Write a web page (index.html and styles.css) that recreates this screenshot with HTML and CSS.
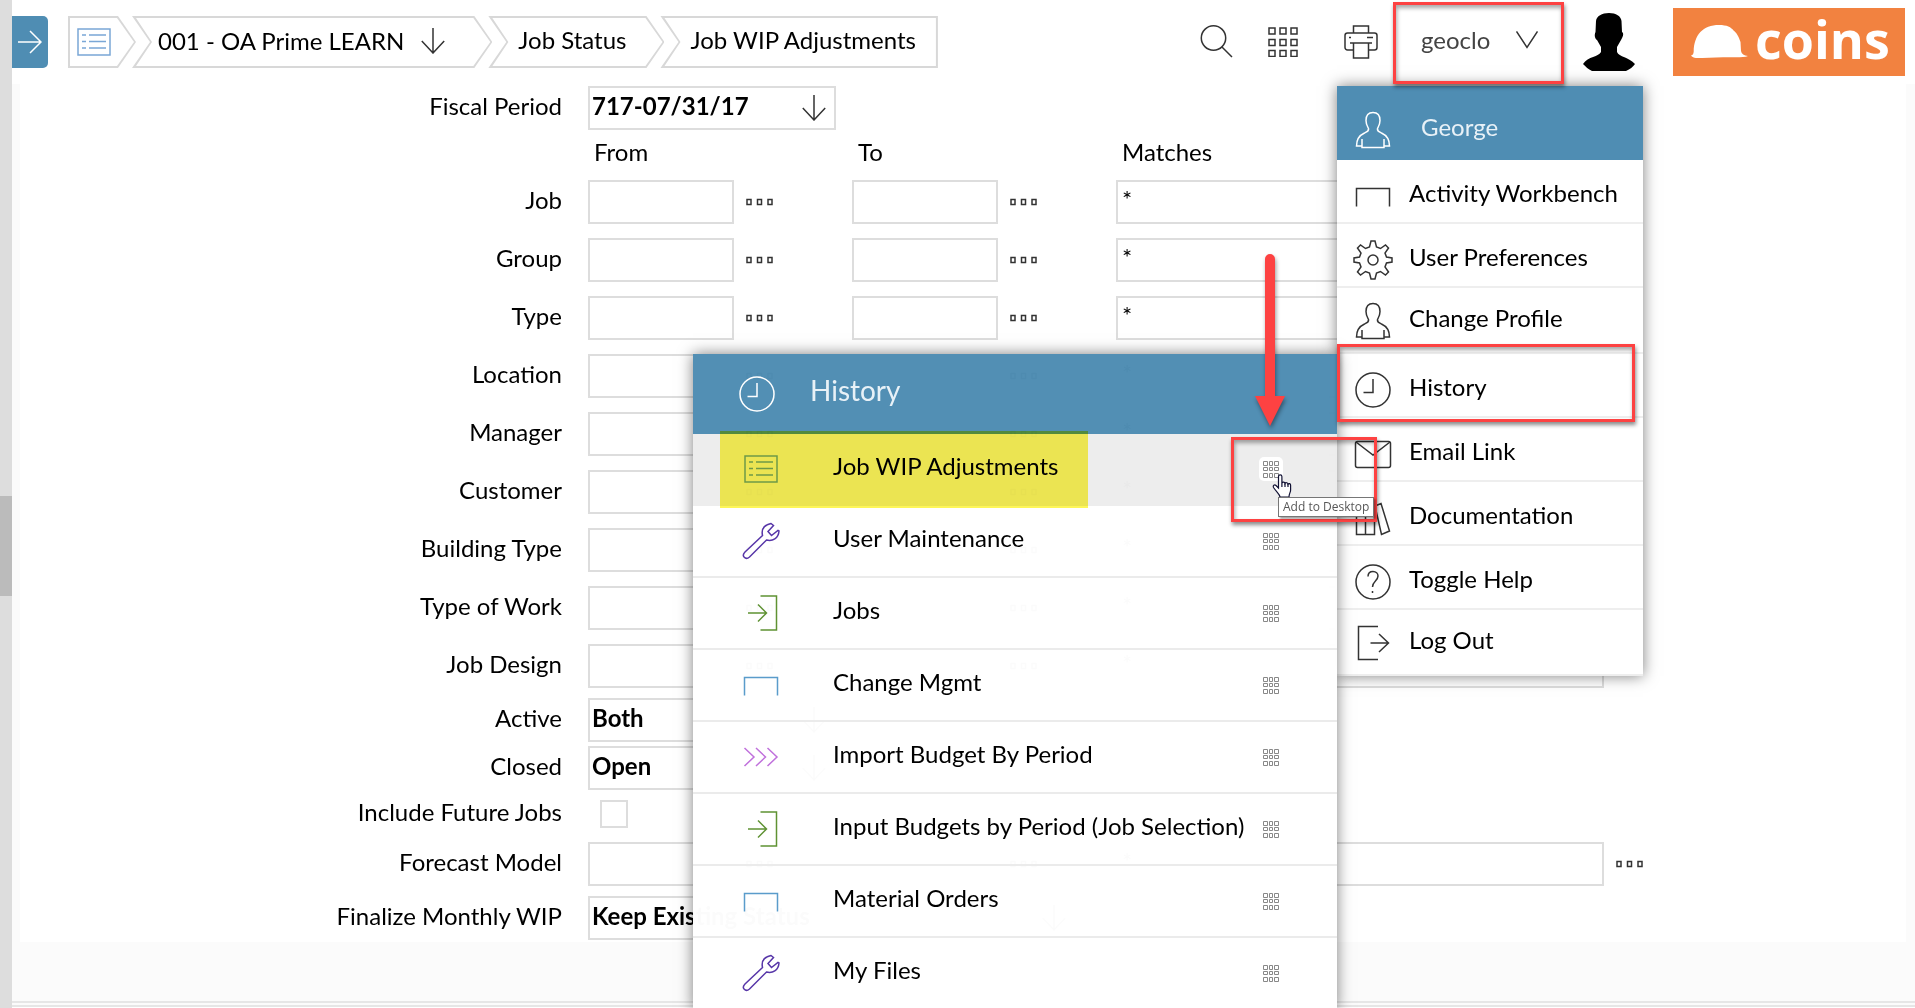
FILE: index.html
```html
<!DOCTYPE html>
<html lang="en">
<head>
<meta charset="utf-8">
<title>Job WIP Adjustments</title>
<link rel="stylesheet" href="styles.css">
</head>
<body>
<svg class="sprite" aria-hidden="true">
  <symbol id="i-dots" viewBox="0 0 28 8"><path d="M1 1.500h4v5H1zM11.500 1.500h4v5h-4zM22 1.500h4v5h-4z"/></symbol>
  <symbol id="i-down" viewBox="0 0 24 26"><path d="M12 0v25M.800 13 12 25 23.200 13"/></symbol>
  <symbol id="i-list" viewBox="0 0 34 28"><path d="M1 1h32v26H1zM5 7h4M12 7h17M5 13.500h4M12 13.500h17M5 20h4M12 20h17"/></symbol>
  <symbol id="i-grid" viewBox="0 0 30 30"><path d="M1 1h6v6H1zM12 1h6v6h-6zM23 1h6v6h-6zM1 12.500h6v6H1zM12 12.500h6v6h-6zM23 12.500h6v6h-6zM1 23.500h6v6H1zM12 23.500h6v6h-6zM23 23.500h6v6h-6z"/></symbol>
  <symbol id="i-tiles" viewBox="0 0 16 17"><path d="M.500.500h4v4h-4zM6.500.500h3v4h-3zM11.500.500h4v4h-4zM.500 6.500h4v3h-4zM6.500 6.500h3v3h-3zM11.500 6.500h4v3h-4zM.500 12.500h4v4h-4zM6.500 12.500h3v4h-3zM11.500 12.500h4v4h-4z"/></symbol>
  <symbol id="i-person" viewBox="0 0 40 40"><path d="M20 2.500c-5 0-7 3.500-7 8 0 4 1.500 6 2.500 8 .500 2.500-1 3-4 4.500C6 25.500 3.500 29 3.500 36h5.500v1.500h22V36h5.500C36.500 29 34 25.500 28.500 23c-3-1.500-4.500-2-4-4.500 1-2 2.500-4 2.500-8 0-4.500-2-8-7-8zM9 29v7M31 29v7"/></symbol>
  <symbol id="i-bench" viewBox="0 0 40 40"><path d="M3.500 30.500v-18h33v18"/></symbol>
  <symbol id="i-gear" viewBox="0 0 40 40"><circle cx="20" cy="20" r="5"/><path d="M18 1h4l1.500 6 4 1.500 5-3.500 3 3-3.500 5 1.500 4 5.500 1v4l-5.500 1-1.500 4 3.500 5-3 3-5-3.500-4 1.500-1.500 6h-4l-1.500-6-4-1.500-5 3.500-3-3L8 27l-1.500-4-5.500-1v-4l5.500-1L8 13 4.500 8l3-3 5 3.500 4-1.500z"/></symbol>
  <symbol id="i-clock" viewBox="0 0 40 40"><circle cx="20" cy="20" r="17"/><path d="M20 9v13.500h-9.500"/></symbol>
  <symbol id="i-mail" viewBox="0 0 40 40"><rect x="2.500" y="7.500" width="35" height="26" rx="2"/><path d="m3 8 17 13L37 8"/></symbol>
  <symbol id="i-books" viewBox="0 0 40 40"><path d="M3.500 5.500h9v31h-9zM12.500 5.500h9v31h-9zM22 8l6-2.500L36.500 33l-8 3.500z"/></symbol>
  <symbol id="i-help" viewBox="0 0 40 40"><circle cx="20" cy="20" r="17"/><path d="M15 14.500c0-3 2-5 5-5s5 2 5 4.500c0 5-5.500 5-5.500 11M19.500 29v2"/></symbol>
  <symbol id="i-logout" viewBox="0 0 40 40"><path d="M25 3.500H5.500v33H25M17.500 20h18M26 11l9.500 9-9.500 9"/></symbol>
  <symbol id="i-login" viewBox="0 0 40 40"><path d="M19.500 3h16v34h-16M7 20h18.500M17 11.500l8.500 8.500-8.500 8.500"/></symbol>
  <symbol id="i-wrench" viewBox="0 0 40 40"><path d="M30 2.500c-7 1.500-10 5-8.500 12L4 31c-4 4 .5 8.500 4.500 5L25.500 19c6 1.500 12-1.500 12.500-9l-1-.5-6.500 5-3.500-4 5.500-6z"/></symbol>
  <symbol id="i-chevs" viewBox="0 0 40 40"><path d="M3.500 11 13 20l-9.500 9M15 11l9.500 9-9.500 9M26.500 11l9.500 9-9.500 9"/></symbol>
</svg>

<div class="app">
  <div class="splitter"><div class="splitter-thumb"></div></div>

  <div class="page">
    <header class="topbar">
      <button class="expand" type="button" aria-label="Expand menu">
        <svg width="24" height="24" viewBox="0 0 24 24"><path d="M0 12h23M12 1l11 11-11 11"/></svg>
      </button>
      <nav class="crumbs" aria-label="Breadcrumb">
        <a class="crumb crumb-first" href="#" aria-label="Home"><svg class="ico-list" width="34" height="28"><use href="#i-list"/></svg></a>
        <a class="crumb crumb-company" href="#">001 - OA Prime LEARN <svg width="24" height="26"><use href="#i-down"/></svg></a>
        <a class="crumb" href="#">Job Status</a>
        <a class="crumb crumb-last" href="#">Job WIP Adjustments</a>
      </nav>
      <div class="tools">
        <button type="button" aria-label="Search"><svg width="34" height="34" viewBox="0 0 34 34"><circle cx="13.500" cy="13" r="12.200"/><path d="m22 22 10 10"/></svg></button>
        <button class="tool-grid" type="button" aria-label="Desktop"><svg width="30" height="30"><use href="#i-grid"/></svg></button>
        <button class="tool-print" type="button" aria-label="Print"><svg width="34" height="34" viewBox="0 0 34 34"><path d="M9.500 8V1h15v7M9 25H3.500A2.500 2.500 0 0 1 1 22.500v-12A2.500 2.500 0 0 1 3.500 8h27a2.500 2.500 0 0 1 2.500 2.500v12a2.500 2.500 0 0 1-2.500 2.500H25M6 18h22M9.500 18v15h15V18M5 12.500h2M23 12.500h6"/></svg></button>
        <button class="user" type="button">geoclo <svg width="22" height="18" viewBox="0 0 22 18"><path d="m.500.500 10.500 16 10.500-16"/></svg></button>
        <svg class="avatar" width="52" height="58" viewBox="0 0 52 58"><path d="M26 0c7 0 12 3 12.500 8l.5 11c1.500.5 1.500 3 .5 5s-1 2.500-1.500 3l-4 7v5c2 5 12 5 18 12-2 3-5 5-9 7H9c-4-2-6-4-9-7 5-8 16-7 18-12v-5l-4-7c-2-1-3-5-1.500-8l.5-11C13.500 3 19 0 26 0z"/></svg>
        <a class="logo" href="#">
          <svg width="58" height="34" viewBox="0 0 58 34"><path d="M0 30.500c2-.5 2.500-1.500 2.700-4C3 10 12 0 28 0c8 0 12 2 15 6 2 1 5 6 6.500 11l.500 9c.5 3 3 4.500 7 5-4 1.500-10 1.500-22 1.200C24 32 14 33 5 33c-2 0-4-1-5-2.500z"/></svg>
          <span>coins</span>
        </a>
      </div>
    </header>

    <main class="panel">
      <form class="form">
        <div class="row row-flush">
          <label class="label" for="period">Fiscal Period</label>
          <div class="pick"><select id="period"><option>717-07/31/17</option></select><svg width="24" height="26"><use href="#i-down"/></svg></div>
        </div>
        <div class="row heads"><span class="label"></span><span class="head">From</span><span class="head">To</span><span class="head">Matches</span></div>

        <div class="row"><label class="label" for="job">Job</label>
          <div class="lookup"><input id="job"><button type="button" aria-label="Find"><svg><use href="#i-dots"/></svg></button></div>
          <div class="lookup"><input aria-label="Job to"><button type="button" aria-label="Find"><svg><use href="#i-dots"/></svg></button></div>
          <div class="lookup lookup-wide"><input aria-label="Job matches" value="*"><button type="button" aria-label="Find"><svg><use href="#i-dots"/></svg></button></div></div>
        <div class="row"><label class="label" for="group">Group</label>
          <div class="lookup"><input id="group"><button type="button" aria-label="Find"><svg><use href="#i-dots"/></svg></button></div>
          <div class="lookup"><input aria-label="Group to"><button type="button" aria-label="Find"><svg><use href="#i-dots"/></svg></button></div>
          <div class="lookup lookup-wide"><input aria-label="Group matches" value="*"><button type="button" aria-label="Find"><svg><use href="#i-dots"/></svg></button></div></div>
        <div class="row"><label class="label" for="type">Type</label>
          <div class="lookup"><input id="type"><button type="button" aria-label="Find"><svg><use href="#i-dots"/></svg></button></div>
          <div class="lookup"><input aria-label="Type to"><button type="button" aria-label="Find"><svg><use href="#i-dots"/></svg></button></div>
          <div class="lookup lookup-wide"><input aria-label="Type matches" value="*"><button type="button" aria-label="Find"><svg><use href="#i-dots"/></svg></button></div></div>
        <div class="row"><label class="label" for="location">Location</label>
          <div class="lookup"><input id="location"><button type="button" aria-label="Find"><svg><use href="#i-dots"/></svg></button></div>
          <div class="lookup"><input aria-label="Location to"><button type="button" aria-label="Find"><svg><use href="#i-dots"/></svg></button></div>
          <div class="lookup lookup-wide"><input aria-label="Location matches" value="*"><button type="button" aria-label="Find"><svg><use href="#i-dots"/></svg></button></div></div>
        <div class="row"><label class="label" for="manager">Manager</label>
          <div class="lookup"><input id="manager"><button type="button" aria-label="Find"><svg><use href="#i-dots"/></svg></button></div>
          <div class="lookup"><input aria-label="Manager to"><button type="button" aria-label="Find"><svg><use href="#i-dots"/></svg></button></div>
          <div class="lookup lookup-wide"><input aria-label="Manager matches" value="*"><button type="button" aria-label="Find"><svg><use href="#i-dots"/></svg></button></div></div>
        <div class="row"><label class="label" for="customer">Customer</label>
          <div class="lookup"><input id="customer"><button type="button" aria-label="Find"><svg><use href="#i-dots"/></svg></button></div>
          <div class="lookup"><input aria-label="Customer to"><button type="button" aria-label="Find"><svg><use href="#i-dots"/></svg></button></div>
          <div class="lookup lookup-wide"><input aria-label="Customer matches" value="*"><button type="button" aria-label="Find"><svg><use href="#i-dots"/></svg></button></div></div>
        <div class="row"><label class="label" for="building">Building Type</label>
          <div class="lookup"><input id="building"><button type="button" aria-label="Find"><svg><use href="#i-dots"/></svg></button></div>
          <div class="lookup"><input aria-label="Building Type to"><button type="button" aria-label="Find"><svg><use href="#i-dots"/></svg></button></div>
          <div class="lookup lookup-wide"><input aria-label="Building Type matches" value="*"><button type="button" aria-label="Find"><svg><use href="#i-dots"/></svg></button></div></div>
        <div class="row"><label class="label" for="work">Type of Work</label>
          <div class="lookup"><input id="work"><button type="button" aria-label="Find"><svg><use href="#i-dots"/></svg></button></div>
          <div class="lookup"><input aria-label="Type of Work to"><button type="button" aria-label="Find"><svg><use href="#i-dots"/></svg></button></div>
          <div class="lookup lookup-wide"><input aria-label="Type of Work matches" value="*"><button type="button" aria-label="Find"><svg><use href="#i-dots"/></svg></button></div></div>
        <div class="row row-close"><label class="label" for="design">Job Design</label>
          <div class="lookup"><input id="design"><button type="button" aria-label="Find"><svg><use href="#i-dots"/></svg></button></div>
          <div class="lookup"><input aria-label="Job Design to"><button type="button" aria-label="Find"><svg><use href="#i-dots"/></svg></button></div>
          <div class="lookup lookup-wide"><input aria-label="Job Design matches" value="*"><button type="button" aria-label="Find"><svg><use href="#i-dots"/></svg></button></div></div>

        <div class="row row-tight"><label class="label" for="active">Active</label>
          <div class="pick"><select id="active"><option>Both</option></select><svg width="24" height="26"><use href="#i-down"/></svg></div></div>
        <div class="row row-close"><label class="label" for="closed">Closed</label>
          <div class="pick"><select id="closed"><option>Open</option></select><svg width="24" height="26"><use href="#i-down"/></svg></div></div>
        <div class="row row-check"><label class="label" for="future">Include Future Jobs</label><input class="check" type="checkbox" id="future"></div>
        <div class="row row-close"><label class="label" for="model">Forecast Model</label>
          <div class="lookup"><input id="model"><button type="button" aria-label="Find"><svg><use href="#i-dots"/></svg></button></div>
          <div class="lookup"><input aria-label="Forecast Model to"><button type="button" aria-label="Find"><svg><use href="#i-dots"/></svg></button></div>
          <div class="lookup lookup-wide"><input aria-label="Forecast Model matches" value="*"><button type="button" aria-label="Find"><svg><use href="#i-dots"/></svg></button></div></div>
        <div class="row row-flush"><label class="label" for="finalize">Finalize Monthly WIP</label>
          <div class="pick pick-wide"><select id="finalize"><option>Keep Existing Status</option></select><svg width="24" height="26"><use href="#i-down"/></svg></div></div>
      </form>
    </main>
    <div class="page-foot"></div>
  </div>

  <nav class="menu" aria-label="User menu">
    <div class="menu-head"><svg width="40" height="40"><use href="#i-person"/></svg><span>George</span></div>
    <a class="menu-item" href="#"><svg width="40" height="40"><use href="#i-bench"/></svg><span>Activity Workbench</span></a>
    <a class="menu-item" href="#"><svg width="40" height="40"><use href="#i-gear"/></svg><span>User Preferences</span></a>
    <a class="menu-item menu-item-end" href="#"><svg width="40" height="40"><use href="#i-person"/></svg><span>Change Profile</span></a>
    <a class="menu-item" href="#"><svg width="40" height="40"><use href="#i-clock"/></svg><span>History</span><i class="mark mark-history"></i></a>
    <a class="menu-item" href="#"><svg width="40" height="40"><use href="#i-mail"/></svg><span>Email Link</span></a>
    <a class="menu-item" href="#"><svg width="40" height="40"><use href="#i-books"/></svg><span>Documentation</span></a>
    <a class="menu-item" href="#"><svg width="40" height="40"><use href="#i-help"/></svg><span>Toggle Help</span></a>
    <a class="menu-item menu-item-end" href="#"><svg width="40" height="40"><use href="#i-logout"/></svg><span>Log Out</span></a>
  </nav>

  <section class="history" aria-label="History">
    <h2 class="history-head"><svg width="40" height="40"><use href="#i-clock"/></svg><span>History</span></h2>
    <div class="history-row is-active">
      <svg class="c-blue" width="34" height="28"><use href="#i-list"/></svg><a href="#">Job WIP Adjustments</a>
      <button type="button" aria-label="Add to Desktop"><svg width="16" height="17"><use href="#i-tiles"/></svg></button>
      <i class="highlight"></i>
    </div>
    <div class="history-row"><svg class="c-purple" width="40" height="40"><use href="#i-wrench"/></svg><a href="#">User Maintenance</a><button type="button" aria-label="Add to Desktop"><svg width="16" height="17"><use href="#i-tiles"/></svg></button></div>
    <div class="history-row"><svg class="c-green" width="40" height="40"><use href="#i-login"/></svg><a href="#">Jobs</a><button type="button" aria-label="Add to Desktop"><svg width="16" height="17"><use href="#i-tiles"/></svg></button></div>
    <div class="history-row"><svg class="c-sky" width="40" height="40"><use href="#i-bench"/></svg><a href="#">Change Mgmt</a><button type="button" aria-label="Add to Desktop"><svg width="16" height="17"><use href="#i-tiles"/></svg></button></div>
    <div class="history-row"><svg class="c-orchid" width="40" height="40"><use href="#i-chevs"/></svg><a href="#">Import Budget By Period</a><button type="button" aria-label="Add to Desktop"><svg width="16" height="17"><use href="#i-tiles"/></svg></button></div>
    <div class="history-row"><svg class="c-green" width="40" height="40"><use href="#i-login"/></svg><a href="#">Input Budgets by Period (Job Selection)</a><button type="button" aria-label="Add to Desktop"><svg width="16" height="17"><use href="#i-tiles"/></svg></button></div>
    <div class="history-row"><svg class="c-sky" width="40" height="40"><use href="#i-bench"/></svg><a href="#">Material Orders</a><button type="button" aria-label="Add to Desktop"><svg width="16" height="17"><use href="#i-tiles"/></svg></button></div>
    <div class="history-row"><svg class="c-purple" width="40" height="40"><use href="#i-wrench"/></svg><a href="#">My Files</a><button type="button" aria-label="Add to Desktop"><svg width="16" height="17"><use href="#i-tiles"/></svg></button></div>

    <svg class="arrow" width="30" height="172" viewBox="0 0 30 172"><path d="M10 142V5a5 5 0 0 1 10 0v137h10l-15 30-15-30z"/></svg>
    <i class="mark mark-add"></i>
    <svg class="hand" width="20" height="24" viewBox="0 0 20 24"><path d="M6.500 14V2.500a1.700 1.700 0 0 1 3.400 0V9c.5-1.300 2.800-1.200 3.100.5.600-1.200 2.700-1 3 .6.700-1 2.600-.6 2.600 1.200V16c0 2.500-1.600 3.500-1.600 7H8c0-2.500-3-4.500-6.500-9.500-1-2 1-3.400 2.500-2z"/><path d="M9.900 9v4M13 9.500V13M16 10v3"/></svg>
    <div class="tip" role="tooltip">Add to Desktop</div>
  </section>

  <i class="mark mark-user"></i>
</div>
</body>
</html>
```
FILE: styles.css
```css
* { box-sizing: border-box; }

body {
  margin: 0;
  font: 24px/32px Lato, "Open Sans", sans-serif;
  color: #000;
  background: #fff;
}

a { color: inherit; text-decoration: none; }

button {
  padding: 0;
  border: 0;
  background: none;
  font: inherit;
  color: inherit;
}

svg {
  display: block;
  flex: none;
  fill: none;
  stroke: #333;
  stroke-width: 1.5;
}

.sprite { position: absolute; width: 0; height: 0; }

.app {
  position: relative;
  display: flex;
  height: 100vh;
  overflow: hidden;
}

/* Splitter at the left edge */
.splitter {
  flex: 0 0 12px;
  display: flex;
  flex-direction: column;
  justify-content: center;
  background: #ddd;
}
.splitter-thumb { height: 100px; margin-top: 84px; background: #bbb; }

.page { flex: 1; display: flex; flex-direction: column; min-width: 0; }

/* Top bar */
.topbar {
  flex: 0 0 84px;
  display: flex;
  align-items: center;
  padding-right: 10px;
}
.expand {
  display: flex;
  align-items: center;
  justify-content: center;
  width: 36px;
  height: 52px;
  border-radius: 0 5px 5px 0;
  background: #4f8db3;
}
.expand svg { stroke: #fff; }

.crumbs { display: flex; margin-left: 20px; }
.crumb {
  position: relative;
  z-index: 0;
  display: flex;
  align-items: center;
  height: 52px;
  margin-left: -4px;
  padding: 0 38px 4px 30px;
  background: #d8d8d8;
  white-space: nowrap;
  clip-path: polygon(0 0, calc(100% - 18px) 0, 100% 50%, calc(100% - 18px) 100%, 0 100%, 18px 50%);
}
.crumb::before {
  content: "";
  position: absolute;
  z-index: -1;
  inset: 0;
  background: #fff;
  clip-path: polygon(4px 2px, calc(100% - 19px) 2px, calc(100% - 2px) 50%, calc(100% - 19px) calc(100% - 2px), 4px calc(100% - 2px), 20px 50%);
}
.crumb-first {
  margin-left: 0;
  padding: 0 25px 0 9px;
  clip-path: polygon(0 0, calc(100% - 18px) 0, 100% 50%, calc(100% - 18px) 100%, 0 100%);
}
.crumb-first::before {
  clip-path: polygon(2px 2px, calc(100% - 19px) 2px, calc(100% - 2px) 50%, calc(100% - 19px) calc(100% - 2px), 2px calc(100% - 2px));
}
.crumb-company { gap: 17px; padding: 0 47px 2px 26px; }
.crumb-last {
  padding-right: 22px;
  clip-path: polygon(0 0, 100% 0, 100% 100%, 0 100%, 18px 50%);
}
.crumb-last::before {
  clip-path: polygon(4px 2px, calc(100% - 2px) 2px, calc(100% - 2px) calc(100% - 2px), 4px calc(100% - 2px), 20px 50%);
}
.ico-list { stroke: #7aa7d6; }

.tools { display: flex; align-items: center; margin-left: auto; }
.tool-grid { margin-left: 34px; }
.tool-print { margin-left: 46px; }
.user {
  display: flex;
  align-items: center;
  justify-content: space-between;
  width: 171px;
  height: 82px;
  margin-left: 15px;
  padding: 0 26px 4px 28px;
  color: #444;
}
.avatar { margin-left: 19px; fill: #000; stroke: none; }
.logo {
  display: flex;
  align-items: center;
  gap: 6px;
  width: 232px;
  height: 68px;
  margin-left: 38px;
  padding-left: 18px;
  background: #f28240;
  color: #fff;
  font: 700 52px/68px "Open Sans", sans-serif;
}
.logo svg { fill: #fff; stroke: none; }
.logo span { padding-bottom: 6px; }

/* Selection form */
.panel { padding: 0 9px 0 8px; background: #fbfbfb; }
.form { padding: 2px 262px 2px 0; background: #fff; }
.row { display: flex; align-items: center; margin-bottom: 14px; }
.row-close { margin-bottom: 10px; }
.row-tight { margin-bottom: 4px; }
.row-flush { margin-bottom: 0; }
.row-check { height: 28px; }
.label { flex: 0 0 542px; margin-right: 26px; padding-bottom: 5px; text-align: right; }
.heads { height: 50px; margin-bottom: 0; padding-bottom: 7px; }
.head { width: 264px; padding-left: 6px; }

.lookup { display: flex; align-items: center; gap: 12px; width: 264px; }
.lookup input { width: 146px; }
.lookup-wide { flex: 1; width: auto; }
.lookup-wide input { flex: 1; width: auto; min-width: 0; }
.lookup svg { width: 28px; height: 8px; }

.lookup input, .pick select {
  height: 44px;
  margin: 0;
  padding: 0 4px 8px;
  border: 2px solid #ddd;
  border-radius: 0;
  background: #fff;
  font: inherit;
  color: #000;
}
.pick { display: grid; align-items: center; width: 248px; }
.pick-wide { width: 488px; }
.pick select {
  grid-area: 1 / 1;
  appearance: none;
  padding: 0 2px 4px;
  font-weight: 700;
}
.pick svg { grid-area: 1 / 1; justify-self: end; margin-right: 10px; pointer-events: none; }
.check {
  appearance: none;
  width: 28px;
  height: 28px;
  margin: 0 0 0 12px;
  border: 2px solid #ddd;
  background: #fff;
}

.page-foot {
  flex: 1;
  margin-bottom: 1px;
  border-bottom: 6px double #e6e6e6;
  background: #fbfbfb;
}

/* User menu */
.menu {
  position: absolute;
  top: 86px;
  right: 272px;
  width: 306px;
  background: #fff;
  box-shadow: 0 0 14px rgba(0, 0, 0, .5);
}
.menu-head, .menu-item { display: flex; align-items: center; padding-left: 16px; }
.menu-head {
  gap: 28px;
  height: 74px;
  padding-top: 14px;
  background: #4f8db3;
  color: #e8f1f7;
}
.menu-head svg { stroke: #fff; }
.menu-head span { padding-bottom: 6px; }
.menu-item {
  position: relative;
  gap: 16px;
  height: 64px;
  padding-top: 10px;
  border-bottom: 2px solid #eee;
}
.menu-item span { padding-bottom: 6px; }
.menu-item-end { height: 66px; padding-top: 1px; }

/* History panel */
.history {
  position: absolute;
  top: 354px;
  right: 578px;
  width: 644px;
  box-shadow: 0 0 14px rgba(0, 0, 0, .5);
}
.history-head {
  display: flex;
  align-items: center;
  gap: 33px;
  height: 80px;
  margin: 0;
  padding-left: 44px;
  background: rgba(79, 141, 179, .985);
  color: #e8f1f7;
  font-size: 28px;
  font-weight: 400;
}
.history-head svg { stroke: #fff; }
.history-head span { padding-bottom: 8px; }
.history-row {
  position: relative;
  display: grid;
  grid-template-columns: 128px 1fr 24px;
  column-gap: 8px;
  align-items: center;
  height: 72px;
  padding: 0 54px 0 4px;
  border-bottom: 2px solid #ebebeb;
  background: rgba(255, 255, 255, .985);
}
.history-row > svg { justify-self: center; }
.history-row a { margin-right: -8px; padding-bottom: 6px; white-space: nowrap; }
.history-row button {
  display: grid;
  place-items: center;
  width: 24px;
  height: 24px;
  border-radius: 5px;
}
.history-row button svg { stroke: #888; stroke-width: 1; }
.is-active { background: rgba(237, 237, 237, .985); border-color: transparent; }
.is-active button { background: #fff; }
.c-blue { stroke: #6f9fd0; }
.c-purple { stroke: #5736a8; }
.c-green { stroke: #5f9233; }
.c-sky { stroke: #5a9ccb; }
.c-orchid { stroke: #c071dc; }

.highlight {
  position: absolute;
  z-index: 1;
  top: -3px;
  left: 27px;
  width: 368px;
  height: 77px;
  background: #fdf658;
  mix-blend-mode: multiply;
}

/* Call-outs drawn over the page */
.mark {
  position: absolute;
  z-index: 3;
  border: 3px solid #fd4242;
  box-shadow: 1px 3px 4px rgba(0, 0, 0, .45), inset 1px 3px 4px rgba(0, 0, 0, .35);
  pointer-events: none;
}
.mark-user { top: 2px; right: 351px; width: 171px; height: 82px; }
.mark-history { top: -10px; left: 0; width: 298px; height: 78px; }
.mark-add { top: 83px; left: 538px; width: 146px; height: 85px; }
.arrow {
  position: absolute;
  z-index: 3;
  top: -100px;
  left: 562px;
  fill: #fd4242;
  stroke: none;
  filter: drop-shadow(1px 3px 2px rgba(0, 0, 0, .4));
}
.hand {
  position: absolute;
  z-index: 4;
  top: 120px;
  left: 579px;
  fill: #fff;
  stroke: #113;
  stroke-width: 1.2;
}
.tip {
  position: absolute;
  z-index: 4;
  top: 143px;
  left: 585px;
  padding: 0 4px;
  border: 1px solid #767676;
  background: #fff;
  color: #575757;
  font: 12px/18px "Open Sans", sans-serif;
  white-space: nowrap;
  box-shadow: 2px 2px 2px rgba(0, 0, 0, .35);
}
```
